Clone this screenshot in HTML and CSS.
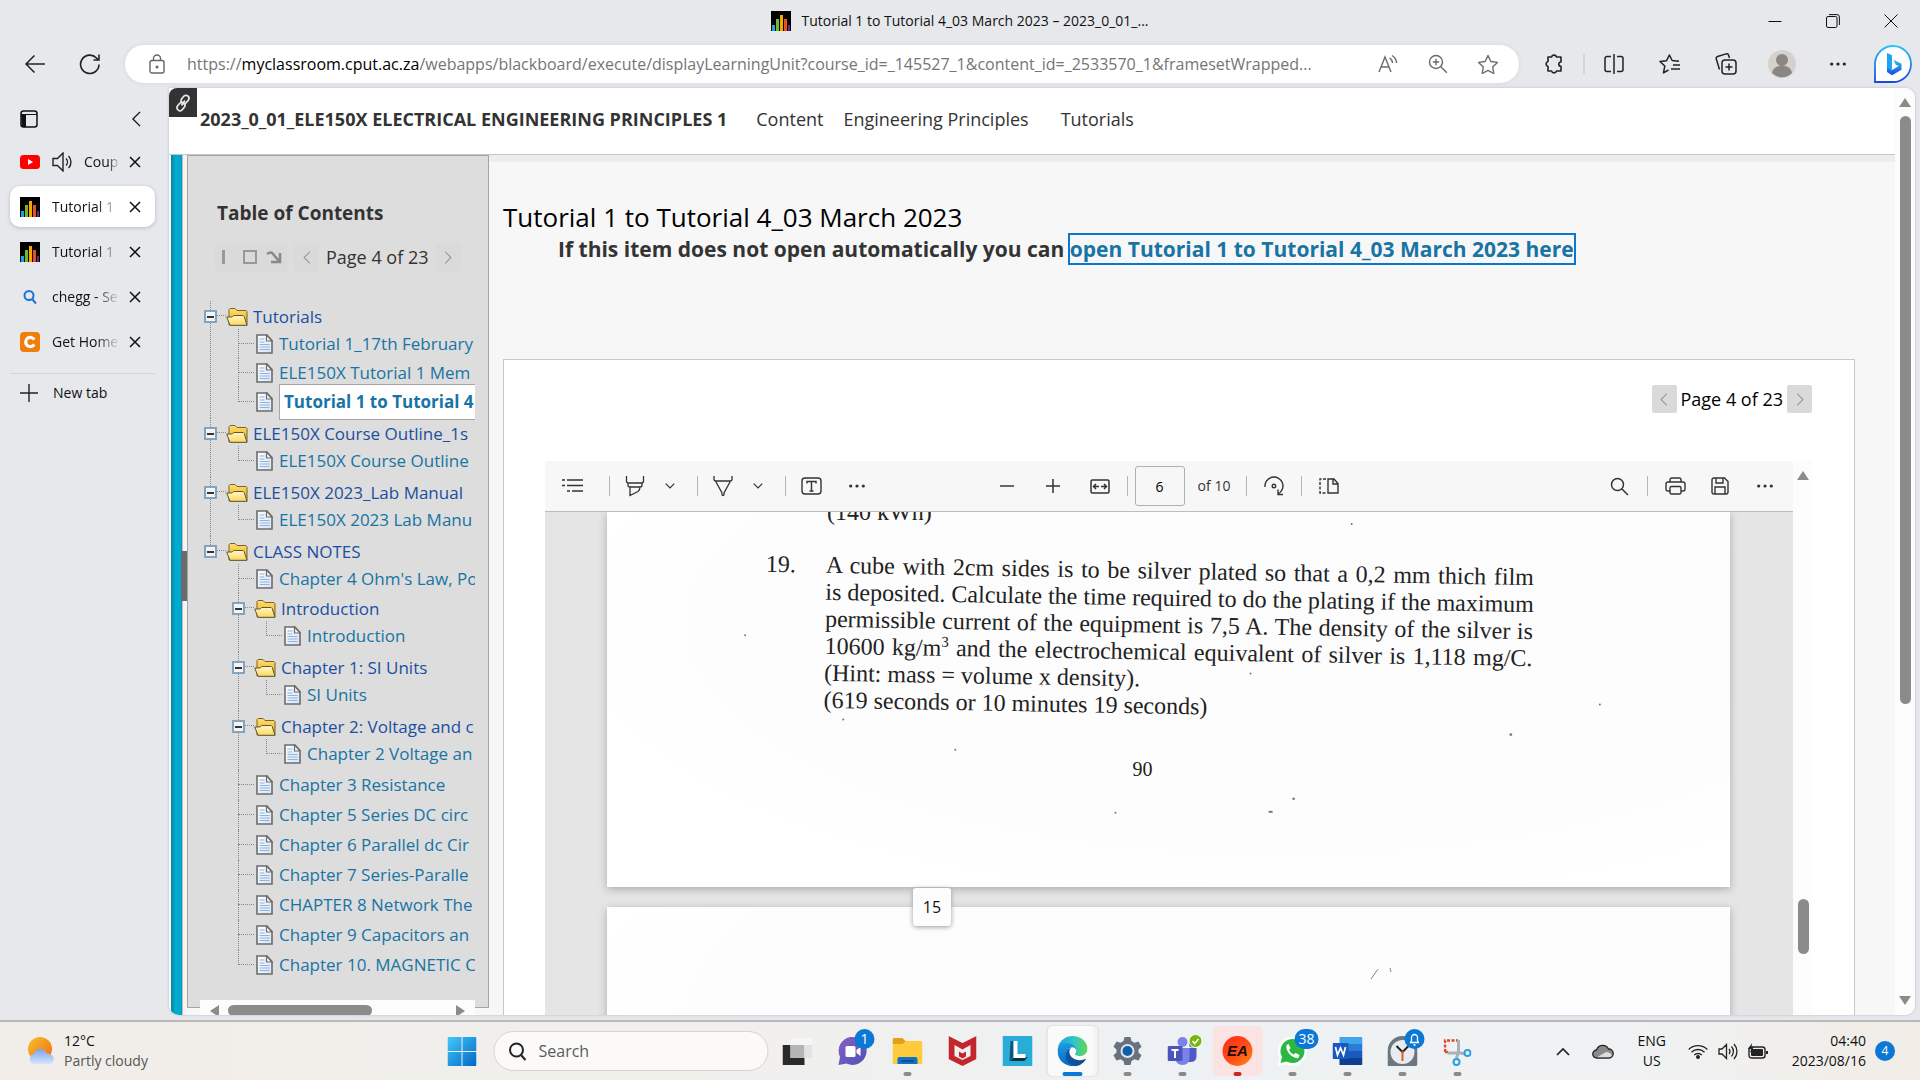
FILE: index.html
```html
<!DOCTYPE html>
<html lang="en">
<head>
<meta charset="utf-8">
<title>Tutorial 1 to Tutorial 4_03 March 2023 – 2023_0_01_...</title>
<link rel="stylesheet" href="styles.css">
</head>
<body>
<svg class="sprite" width="0" height="0" aria-hidden="true">
  <defs>
    <linearGradient id="gFolder" x1="0" y1="0" x2="0" y2="1"><stop offset="0" stop-color="#ffdf70"/><stop offset="1" stop-color="#e9aa10"/></linearGradient>
    <linearGradient id="gFlap" x1="0" y1="0" x2="0" y2="1"><stop offset="0" stop-color="#fff7c8"/><stop offset="1" stop-color="#fbd85a"/></linearGradient>
    <linearGradient id="gPage" x1="0" y1="0" x2="1" y2="1"><stop offset="0" stop-color="#ffffff"/><stop offset="1" stop-color="#d5e3f5"/></linearGradient>
    <linearGradient id="gBing" x1="0" y1="0" x2="0" y2="1"><stop offset="0" stop-color="#2bc3f5"/><stop offset="1" stop-color="#1b48e0"/></linearGradient>
    <linearGradient id="gSun" x1="0" y1="0" x2="1" y2="1"><stop offset="0" stop-color="#f8c12c"/><stop offset="1" stop-color="#ef6c12"/></linearGradient>
    <linearGradient id="gCloud" x1="0" y1="0" x2="0" y2="1"><stop offset="0" stop-color="#7ba4ea"/><stop offset="1" stop-color="#d6e4fb"/></linearGradient>
    <linearGradient id="gWin" x1="0" y1="0" x2="1" y2="1"><stop offset="0" stop-color="#45c8fa"/><stop offset="1" stop-color="#0067c8"/></linearGradient>
    <linearGradient id="gEdgeTop" x1="0" y1="0" x2="1" y2="0"><stop offset="0" stop-color="#1f9fe0"/><stop offset=".55" stop-color="#31c6c8"/><stop offset="1" stop-color="#63d84a"/></linearGradient>
    <linearGradient id="gEdgeMid" x1="0" y1="0" x2="0" y2="1"><stop offset="0" stop-color="#1b9de2"/><stop offset="1" stop-color="#0a6bc4"/></linearGradient>
    <linearGradient id="gEdgeLow" x1="0" y1="0" x2="1" y2="0"><stop offset="0" stop-color="#0c59a4"/><stop offset="1" stop-color="#114a8b"/></linearGradient>
    <linearGradient id="gChat" x1="0" y1="0" x2="1" y2="1"><stop offset="0" stop-color="#8a5fc0"/><stop offset="1" stop-color="#4b53bc"/></linearGradient>
    <symbol id="folder" viewBox="0 0 22 20"><path d="M3 18V2.500l1-1h5l2 2h9l1 1V18z" fill="url(#gFolder)" stroke="#7a6327"/><path d="M.7 10h5.500l1.500-1.500h9.500l1 1L21 18.300H4z" fill="url(#gFlap)" stroke="#5f5637"/></symbol>
    <symbol id="doc" viewBox="0 0 17 20"><path d="M1 1h10l5 5.500V19H1z" fill="url(#gPage)" stroke="#6c6c6c" stroke-width="1.600"/><path d="M10.500 1v6H16z" fill="#f5f5f5" stroke="#6c6c6c" stroke-width="1.200"/><path d="M3.500 5h5M3.500 8h5M3.500 10.500h10M3.500 13h10M3.500 15.500h10" stroke="#8fb3e0" fill="none"/></symbol>
    <symbol id="bb" viewBox="0 0 20 20"><path d="M0 0h20v20H0z" fill="#000"/><path d="M1 14h3v6H1z" fill="#1ba1e8"/><path d="M5 8h3v12H5z" fill="#6fb92c"/><path d="M9 4h3v16H9z" fill="#f6a800"/><path d="M13 8h3v12h-3z" fill="#e8501e"/><path d="M17 14h2v6h-2z" fill="#5b2a86"/></symbol>
    <symbol id="x" viewBox="0 0 12 12"><path d="M1 1l10 10M11 1L1 11" stroke="#111" stroke-width="1.500" fill="none"/></symbol>
    <symbol id="more" viewBox="0 0 20 20"><circle cx="3" cy="10" r="1.800"/><circle cx="10" cy="10" r="1.800"/><circle cx="17" cy="10" r="1.800"/></symbol>
    <symbol id="left" viewBox="0 0 10 18"><path d="M9 1L1 9l8 8" fill="none" stroke="currentColor" stroke-width="1.500"/></symbol>
    <symbol id="right" viewBox="0 0 10 18"><path d="M1 1l8 8-8 8" fill="none" stroke="currentColor" stroke-width="1.500"/></symbol>
    <symbol id="down" viewBox="0 0 10 6"><path d="M.7.700L5 5 9.300.700" fill="none" stroke="#333" stroke-width="1.200"/></symbol>
  </defs>
</svg>

<header class="titlebar">
  <div class="window-title"><svg width="20" height="20"><use href="#bb"/></svg><span>Tutorial 1 to Tutorial 4_03 March 2023 – 2023_0_01_...</span></div>
  <div class="window-controls">
    <button aria-label="Minimize"><svg width="14" height="14"><path d="M.5 7.500h13" stroke="#111"/></svg></button>
    <button aria-label="Restore"><svg width="14" height="14" viewBox="0 0 14 14" fill="none" stroke="#111"><rect x=".5" y="2.500" width="10.500" height="11" rx="1.500"/><path d="M3 .6h8a2.400 2.400 0 0 1 2.400 2.400v8"/></svg></button>
    <button aria-label="Close"><svg width="14" height="14" viewBox="0 0 14 14"><path d="M.5.500l13 13M13.500.500l-13 13" stroke="#111"/></svg></button>
  </div>
</header>

<div class="toolbar">
  <button class="tool" aria-label="Back"><svg width="22" height="20" viewBox="0 0 22 20" fill="none" stroke="#222" stroke-width="1.500"><path d="M21 10H2M10.500 1.500L2 10l8.500 8.500"/></svg></button>
  <button class="tool" aria-label="Refresh"><svg width="22" height="22" viewBox="0 0 22 22" fill="none" stroke="#222" stroke-width="1.600"><path d="M20 11.500A9.200 9.200 0 1 1 17.500 5L19.500 7M20 1.500V7h-5.500"/></svg></button>
  <div class="address">
    <button class="lock" aria-label="Site information"><svg width="16" height="20" viewBox="0 0 16 20" fill="none" stroke="#666" stroke-width="1.400"><rect x="1" y="6.500" width="14" height="12.500" rx="2"/><path d="M4.500 6.500V4.500a3.500 3.500 0 0 1 7 0v2"/><circle cx="8" cy="13" r=".8" fill="#444"/></svg></button>
    <div class="url" role="textbox" aria-label="Address">https://<b>myclassroom.cput.ac.za</b>/webapps/blackboard/execute/displayLearningUnit?course_id=_145527_1&amp;content_id=_2533570_1&amp;framesetWrapped...</div>
    <button class="tool" aria-label="Read aloud"><svg width="20" height="20" viewBox="0 0 20 20" fill="none" stroke="#6b6b6b" stroke-width="1.400"><path d="M1 18L7 3l6 15M3 13h8M11.500 4a6 6 0 0 1 3 5M14 1.500a9 9 0 0 1 4.500 7.500"/></svg></button>
    <button class="tool" aria-label="Zoom"><svg width="20" height="20" viewBox="0 0 20 20" fill="none" stroke="#6b6b6b" stroke-width="1.400"><circle cx="8" cy="8" r="6.500"/><path d="M12.800 12.800l6 6M8 4.800v6.400M4.800 8h6.400"/></svg></button>
    <button class="tool" aria-label="Favorite"><svg width="22" height="21" viewBox="0 0 22 21" fill="none" stroke="#6b6b6b" stroke-width="1.400" stroke-linejoin="round"><path d="M11 1.500l2.900 6 6.500.900-4.700 4.600 1.100 6.500L11 16.400l-5.800 3.100 1.100-6.500L1.600 8.400l6.500-.9z"/></svg></button>
  </div>
  <div class="tools">
    <button class="tool" aria-label="Extensions"><svg width="20" height="22" viewBox="0 0 20 22" fill="none" stroke="#222" stroke-width="1.600" stroke-linejoin="round"><path d="M5 4h2.500a2.600 2.600 0 0 1 5 0H17v5a2.200 2.200 0 0 0 0 4.400V18h-4.500a2.600 2.600 0 0 1-5 0H4v-4.500a2.600 2.600 0 0 1 0-5V4z"/></svg></button>
    <i class="rule"></i>
    <button class="tool" aria-label="Split screen"><svg width="20" height="20" viewBox="0 0 20 20" fill="none" stroke="#222" stroke-width="1.500"><path d="M10 0v20M7 2.500H3a2 2 0 0 0-2 2v11a2 2 0 0 0 2 2h4M13 2.500h4a2 2 0 0 1 2 2v11a2 2 0 0 1-2 2h-4"/></svg></button>
    <button class="tool" aria-label="Favorites"><svg width="22" height="20" viewBox="0 0 22 20" fill="none" stroke="#222" stroke-width="1.500" stroke-linejoin="round"><path d="M20 7.300L13.200 6.500 10.400 1 7.600 6.700 1 7.500l4.800 4.500-1.300 6.800L9.500 16M14 11h7M12 15h9"/></svg></button>
    <button class="tool" aria-label="Collections"><svg width="22" height="22" viewBox="0 0 22 22" fill="none" stroke="#222" stroke-width="1.500"><rect x="7" y="7" width="14" height="14" rx="3"/><path d="M14 10.500v7M10.500 14h7M4.500 16.500L1.300 6a2 2 0 0 1 1.300-2.500l8.500-2.600a2 2 0 0 1 2.500 1.300L14.500 5"/></svg></button>
    <button class="tool profile" aria-label="Profile"><svg width="28" height="28" viewBox="0 0 28 28"><circle cx="14" cy="14" r="14" fill="#d5d1cd"/><circle cx="14" cy="10" r="6" fill="#8b8683"/><path d="M4 23a10 7.500 0 0 1 20 0 14 14 0 0 1-20 0z" fill="#8b8683"/></svg></button>
    <button class="tool" aria-label="Settings and more"><svg width="18" height="18" fill="#222"><use href="#more"/></svg></button>
    <button class="bing" aria-label="Bing chat"><svg width="38" height="38" viewBox="0 0 38 38"><path d="M1 37V18.500A18 18 0 1 1 19 37z" fill="#fff" stroke="url(#gBing)" stroke-width="1.800"/><path d="M13 8l5 2.200v14L13 27z" fill="#1fa4f2"/><path d="M13 22.500V27l5 3.200 9.500-5.500v-6l-8-4 2.300 5 3 1.300-6.800 4z" fill="url(#gBing)"/></svg></button>
  </div>
</div>

<div class="workspace">
  <nav class="tabs" aria-label="Tabs">
    <div class="tabs-head">
      <button aria-label="Tab actions"><svg width="18" height="18" viewBox="0 0 18 18"><rect x="1" y="1" width="16" height="16" rx="2.500" fill="none" stroke="#111" stroke-width="1.500"/><path d="M1 4.500h16" stroke="#111"/><path d="M1 5h5v12H2z" fill="#111"/></svg></button>
      <button aria-label="Collapse pane"><svg width="9" height="16"><use href="#left"/></svg></button>
    </div>
    <div class="tab"><svg width="20" height="20" viewBox="0 0 20 20"><rect y="3" width="20" height="14" rx="3.500" fill="#f00"/><path d="M8 7l5 3-5 3z" fill="#fff"/></svg>
      <svg width="20" height="20" viewBox="0 0 20 20" fill="none" stroke="#222" stroke-width="1.400"><path d="M1 6.500h4.500L11 1v18l-5.500-5.500H1zM14 6.500a5 5 0 0 1 0 7M16.500 4a8.500 8.500 0 0 1 0 12"/></svg>
      <a href="#">Coup</a><button aria-label="Close tab"><svg width="12" height="12"><use href="#x"/></svg></button></div>
    <div class="tab current"><svg width="20" height="20"><use href="#bb"/></svg><a href="#">Tutorial 1</a><button aria-label="Close tab"><svg width="12" height="12"><use href="#x"/></svg></button></div>
    <div class="tab"><svg width="20" height="20"><use href="#bb"/></svg><a href="#">Tutorial 1</a><button aria-label="Close tab"><svg width="12" height="12"><use href="#x"/></svg></button></div>
    <div class="tab"><svg width="20" height="20" viewBox="0 0 20 20" fill="none" stroke="#1b74d4" stroke-width="2"><circle cx="9" cy="8.500" r="4.500"/><path d="M12 12l4 4.500"/></svg><a href="#">chegg - Se</a><button aria-label="Close tab"><svg width="12" height="12"><use href="#x"/></svg></button></div>
    <div class="tab"><svg width="20" height="20" viewBox="0 0 20 20"><rect width="20" height="20" rx="4" fill="#f07d0c"/><path d="M14.200 7.600A4.600 4.600 0 1 0 14.200 12.400" fill="none" stroke="#fff" stroke-width="3.200"/></svg><a href="#">Get Home</a><button aria-label="Close tab"><svg width="12" height="12"><use href="#x"/></svg></button></div>
    <button class="new-tab"><svg width="18" height="18" viewBox="0 0 18 18"><path d="M9 0v18M0 9h18" stroke="#222" stroke-width="1.400"/></svg>New tab</button>
  </nav>

  <div class="viewport">
    <div class="site">
      <header class="course">
        <span class="chain"><svg width="18" height="18" viewBox="0 0 18 18" fill="none" stroke="#e8e8e8" stroke-width="1.700"><rect x="8" y="1" width="6" height="9" rx="3" transform="rotate(38 11 5.500)"/><rect x="4" y="8" width="6" height="9" rx="3" transform="rotate(38 7 12.500)"/><path d="M7.500 11.500l3.500-5"/></svg></span>
        <a class="course-name" href="#">2023_0_01_ELE150X ELECTRICAL ENGINEERING PRINCIPLES 1</a>
        <nav><a href="#">Content</a><a href="#">Engineering Principles</a><a href="#">Tutorials</a></nav>
      </header>
      <div class="unit">
        <div class="rail"><span class="grip"></span></div>
        <aside class="toc">
          <div class="toc-panel">
            <h2>Table of Contents</h2>
            <div class="toc-tools">
              <span class="dock">
                <button aria-label="Minimize contents"><svg width="14" height="16"><path d="M3.500 1v14" stroke="#999" stroke-width="3"/></svg></button>
                <button aria-label="Restore contents"><svg width="14" height="14"><rect x="1" y="1" width="12" height="12" fill="none" stroke="#999" stroke-width="2"/></svg></button>
                <button aria-label="Move contents"><svg width="16" height="14" viewBox="0 0 16 14" fill="none" stroke="#888" stroke-width="2.500"><path d="M1 4c3-2 5-2 6 0l6 7M14 3v9H5"/></svg></button>
              </span>
              <button class="step" aria-label="Previous page"><svg width="8" height="13"><use href="#left"/></svg></button>
              <span>Page 4 of 23</span>
              <button class="step" aria-label="Next page"><svg width="8" height="13"><use href="#right"/></svg></button>
            </div>
            <ul class="tree">
              <li class="group"><div class="folder"><button class="toggle" aria-label="Collapse"></button><svg width="22" height="20"><use href="#folder"/></svg><a href="#">Tutorials</a></div>
                <ul>
                  <li class="leaf"><svg width="17" height="20"><use href="#doc"/></svg><a href="#">Tutorial 1_17th February</a></li>
                  <li class="leaf"><svg width="17" height="20"><use href="#doc"/></svg><a href="#">ELE150X Tutorial 1 Mem</a></li>
                  <li class="leaf"><svg width="17" height="20"><use href="#doc"/></svg><a class="selected" href="#">Tutorial 1 to Tutorial 4</a></li>
                </ul></li>
              <li class="group"><div class="folder"><button class="toggle" aria-label="Collapse"></button><svg width="22" height="20"><use href="#folder"/></svg><a href="#">ELE150X Course Outline_1s</a></div>
                <ul><li class="leaf"><svg width="17" height="20"><use href="#doc"/></svg><a href="#">ELE150X Course Outline</a></li></ul></li>
              <li class="group"><div class="folder"><button class="toggle" aria-label="Collapse"></button><svg width="22" height="20"><use href="#folder"/></svg><a href="#">ELE150X 2023_Lab Manual</a></div>
                <ul><li class="leaf"><svg width="17" height="20"><use href="#doc"/></svg><a href="#">ELE150X 2023 Lab Manu</a></li></ul></li>
              <li class="group"><div class="folder"><button class="toggle" aria-label="Collapse"></button><svg width="22" height="20"><use href="#folder"/></svg><a href="#">CLASS NOTES</a></div>
                <ul>
                  <li class="leaf"><svg width="17" height="20"><use href="#doc"/></svg><a href="#">Chapter 4 Ohm's Law, Po</a></li>
                  <li class="group"><div class="folder"><button class="toggle" aria-label="Collapse"></button><svg width="22" height="20"><use href="#folder"/></svg><a href="#">Introduction</a></div>
                    <ul><li class="leaf"><svg width="17" height="20"><use href="#doc"/></svg><a href="#">Introduction</a></li></ul></li>
                  <li class="group"><div class="folder"><button class="toggle" aria-label="Collapse"></button><svg width="22" height="20"><use href="#folder"/></svg><a href="#">Chapter 1: SI Units</a></div>
                    <ul><li class="leaf"><svg width="17" height="20"><use href="#doc"/></svg><a href="#">SI Units</a></li></ul></li>
                  <li class="group"><div class="folder"><button class="toggle" aria-label="Collapse"></button><svg width="22" height="20"><use href="#folder"/></svg><a href="#">Chapter 2: Voltage and c</a></div>
                    <ul><li class="leaf"><svg width="17" height="20"><use href="#doc"/></svg><a href="#">Chapter 2 Voltage an</a></li></ul></li>
                  <li class="leaf"><svg width="17" height="20"><use href="#doc"/></svg><a href="#">Chapter 3 Resistance</a></li>
                  <li class="leaf"><svg width="17" height="20"><use href="#doc"/></svg><a href="#">Chapter 5 Series DC circ</a></li>
                  <li class="leaf"><svg width="17" height="20"><use href="#doc"/></svg><a href="#">Chapter 6 Parallel dc Cir</a></li>
                  <li class="leaf"><svg width="17" height="20"><use href="#doc"/></svg><a href="#">Chapter 7 Series-Paralle</a></li>
                  <li class="leaf"><svg width="17" height="20"><use href="#doc"/></svg><a href="#">CHAPTER 8 Network The</a></li>
                  <li class="leaf"><svg width="17" height="20"><use href="#doc"/></svg><a href="#">Chapter 9 Capacitors an</a></li>
                  <li class="leaf"><svg width="17" height="20"><use href="#doc"/></svg><a href="#">Chapter 10. MAGNETIC C</a></li>
                </ul></li>
            </ul>
          </div>
          <div class="hscroll"><i class="arrow-left"></i><i class="hthumb"></i><i class="arrow-right"></i></div>
        </aside>
        <main class="item">
          <h1>Tutorial 1 to Tutorial 4_03 March 2023</h1>
          <p class="fallback">If this item does not open automatically you can <a href="#">open Tutorial 1 to Tutorial 4_03 March 2023 here</a></p>
          <section class="frame">
            <div class="pager">
              <button class="step" aria-label="Previous page"><svg width="8" height="13"><use href="#left"/></svg></button>
              <span>Page 4 of 23</span>
              <button class="step" aria-label="Next page"><svg width="8" height="13"><use href="#right"/></svg></button>
            </div>
            <div class="pdf">
              <div class="pdf-main">
                <div class="pdf-bar">
                  <div class="bar-left">
                    <button class="wide" aria-label="Contents"><svg width="22" height="16" viewBox="0 0 22 16" fill="none" stroke="#333" stroke-width="1.500"><path d="M0 2h3M5 2h16M0 7.500h3M5 7.500h16M5 13h3M10 13h11"/></svg></button>
                    <i class="sep"></i>
                    <button aria-label="Highlight"><svg width="20" height="22" viewBox="0 0 20 22" fill="none" stroke="#333" stroke-width="1.300"><path d="M1.500 1v5q0 2 2 2h13q2 0 2-2V1M3 8v2q0 2 2 2h10q2 0 2-2V8M5 12v8.500l8-4q2-1.500 2-4.500"/></svg></button>
                    <button class="menu" aria-label="Highlight colors"><svg width="10" height="6"><use href="#down"/></svg></button>
                    <i class="sep"></i>
                    <button aria-label="Draw"><svg width="20" height="22" viewBox="0 0 20 22" fill="none" stroke="#333" stroke-width="1.300"><path d="M1 1v3q0 2 2 2h14q2 0 2-2V1M2.500 6L9 18v1.500q0 1 1 1t1-1V18l6.500-12"/></svg></button>
                    <button class="menu" aria-label="Draw properties"><svg width="10" height="6"><use href="#down"/></svg></button>
                    <i class="sep"></i>
                    <button aria-label="Add text"><svg width="21" height="18" viewBox="0 0 21 18" fill="none" stroke="#333" stroke-width="1.400"><rect x="1" y="1" width="19" height="16" rx="3"/><path d="M6 6.500V4.500h9v2M10.500 4.500V14M8.500 14h4"/></svg></button>
                    <button class="more" aria-label="More tools"><svg width="18" height="18" fill="#333"><use href="#more"/></svg></button>
                  </div>
                  <div class="bar-mid">
                    <button class="minus" aria-label="Zoom out"><svg width="14" height="14"><path d="M0 7h14" stroke="#444" stroke-width="1.600"/></svg></button>
                    <button aria-label="Zoom in"><svg width="14" height="14"><path d="M0 7h14M7 0v14" stroke="#333" stroke-width="1.500"/></svg></button>
                    <button aria-label="Fit to width"><svg width="20" height="15" viewBox="0 0 20 15" fill="none" stroke="#333" stroke-width="1.500"><rect x="1" y="1" width="18" height="13" rx="1.500"/><path d="M9 7.500H4M6 5L3.500 7.500 6 10M11 7.500h5M14 5l2.500 2.500L14 10"/></svg></button>
                    <i class="line"></i>
                    <input type="text" value="6" aria-label="Page number">
                    <span class="total">of 10</span>
                    <i class="line"></i>
                    <button aria-label="Rotate"><svg width="20" height="20" viewBox="0 0 20 20" fill="none" stroke="#333" stroke-width="1.400"><path d="M1 11A9 9 0 1 1 14 18M14 13.500v5h5"/><circle cx="10" cy="10" r="1.800"/></svg></button>
                    <i class="line"></i>
                    <button aria-label="Page view"><svg width="20" height="16" viewBox="0 0 20 16" fill="none" stroke="#333" stroke-width="1.400"><path d="M9 1h6l4 4.500V15H9zM14 1v5h5"/><path d="M7 1H1v14h6" stroke-dasharray="3 1.500"/></svg></button>
                  </div>
                  <div class="bar-right">
                    <button aria-label="Find"><svg width="19" height="19" viewBox="0 0 19 19" fill="none" stroke="#333" stroke-width="1.500"><circle cx="7.500" cy="7.500" r="6"/><path d="M12 12l6 6"/></svg></button>
                    <i class="line"></i>
                    <button aria-label="Print"><svg width="21" height="18" viewBox="0 0 21 18" fill="none" stroke="#333" stroke-width="1.400"><path d="M5 5V3q0-2 2-2h7q2 0 2 2v2M5 14H3q-2 0-2-2V7q0-2 2-2h15q2 0 2 2v5q0 2-2 2h-2"/><rect x="5" y="9.500" width="11" height="7.500" rx="1.500"/></svg></button>
                    <button aria-label="Save"><svg width="18" height="18" viewBox="0 0 18 18" fill="none" stroke="#333" stroke-width="1.400"><path d="M3 1h10.500L17 4.500V15q0 2-2 2H3q-2 0-2-2V3q0-2 2-2zM5 1v5h7V1M4 17v-7h10v7"/></svg></button>
                    <button aria-label="More options"><svg width="18" height="18" fill="#333"><use href="#more"/></svg></button>
                  </div>
                </div>
                <div class="sheets">
                  <article class="sheet">
                    <svg class="specks" viewBox="0 0 1122 374" preserveAspectRatio="none" aria-hidden="true"><g fill="#777"><circle cx="138" cy="123" r="1"/><circle cx="643" cy="161" r="1"/><circle cx="236" cy="207" r="1"/><circle cx="903" cy="222" r="1.400"/><circle cx="992" cy="192" r="1"/><circle cx="348" cy="237" r="1"/><circle cx="686" cy="286" r="1.300"/><path d="M661 298h4v2h-4z"/><circle cx="508" cy="300" r="1"/><circle cx="744" cy="12" r="1"/></g></svg>
                    <p class="answer">(140 kWh)</p>
                    <div class="problem">
                      <span class="number">19.</span>
                      <p>
                        <span class="full">A cube with 2cm sides is to be silver plated so that a 0,2 mm thich film</span>
                        <span class="full">is deposited. Calculate the time required to do the plating if the maximum</span>
                        <span class="full">permissible current of the equipment is 7,5 A. The density of the silver is</span>
                        <span class="full">10600 kg/m<sup>3</sup> and the electrochemical equivalent of silver is 1,118 mg/C.</span>
                        <span>(Hint: mass = volume x density).</span>
                        <span>(619 seconds or 10 minutes 19 seconds)</span>
                      </p>
                    </div>
                    <p class="folio">90</p>
                  </article>
                  <article class="sheet next">
                    <svg width="24" height="14" viewBox="0 0 24 14"><path d="M2 12L9 2M21 1l1 4" stroke="#888" fill="none"/></svg>
                  </article>
                  <span class="page-tip">15</span>
                </div>
              </div>
              <div class="vscroll"><i class="arrow-up"></i><i class="vthumb"></i></div>
            </div>
          </section>
        </main>
      </div>
    </div>
    <div class="page-scroll"><i class="arrow-up"></i><i class="page-thumb"></i><i class="arrow-down"></i></div>
  </div>
</div>

<footer class="taskbar">
  <div class="weather"><svg width="28" height="28" viewBox="0 0 28 28"><circle cx="13" cy="12" r="12" fill="url(#gSun)"/><path d="M7 27a5 5 0 0 1-.5-9.800A7 7 0 0 1 20 17a5 5 0 0 1 3 10z" fill="url(#gCloud)"/></svg><p><span>12°C</span><small>Partly cloudy</small></p></div>
  <div class="dock-apps">
    <button class="start" aria-label="Start"><svg width="29" height="29" viewBox="0 0 29 29" fill="url(#gWin)"><path d="M0 1q0-1 1-1h13v14H0zM15 0h13q1 0 1 1v13H15zM0 15h14v14H1q-1 0-1-1zM15 15h14v13q0 1-1 1H15z"/></svg></button>
    <label class="search"><svg width="18" height="19" viewBox="0 0 18 19" fill="none" stroke="#222" stroke-width="2"><circle cx="8" cy="8" r="6.500"/><path d="M12.500 13l4.500 5"/></svg><input type="text" placeholder="Search" aria-label="Search"></label>
    <div class="apps">
      <button class="app" aria-label="Task view"><svg width="30" height="30" viewBox="0 0 30 30"><path d="M0 9h22v20H0z" fill="#2a2a2a"/><path d="M8 2h22v20H8z" fill="#f6f6f6"/><path d="M8 9h14v13H8z" fill="#b5b5b5"/><path d="M22 9h8v13h-8z" fill="#e2e2e2"/></svg></button>
      <button class="app" aria-label="Chat"><svg width="30" height="30" viewBox="0 0 30 30"><path d="M1 29l1.500-8A14 14 0 1 1 9 27.500z" fill="url(#gChat)"/><rect x="8" y="10" width="10" height="11" rx="1.500" fill="#fff"/><path d="M19 14l4-3v9l-4-3z" fill="#fff"/></svg><b class="badge">1</b></button>
      <button class="app open" aria-label="File Explorer"><svg width="30" height="30" viewBox="0 0 30 30"><rect y="5" width="30" height="23" rx="1.500" fill="#fdcb3c"/><path d="M0 4q0-2 2-2h8l3 3-3 3H0z" fill="#e2a112"/><path d="M5 28v-5q0-2 2-2h16q2 0 2 2v5z" fill="#1271c4"/><path d="M9 24h12v2H9z" fill="#0b4f93"/></svg></button>
      <button class="app" aria-label="McAfee"><svg width="28" height="30" viewBox="0 0 28 30"><path d="M0 0l14 7 14-7v23l-14 7-14-7z" fill="#c3272d"/><path d="M6 9l8 4.500L22 9v11l-8 4-8-4z" fill="#f1f1f1"/><path d="M10.500 15.500L14 17.500l3.500-2v5L14 22.500l-3.500-2z" fill="#c3272d"/></svg></button>
      <button class="app" aria-label="Lenovo"><svg width="30" height="30" viewBox="0 0 30 30"><path d="M0 0h30v30H0z" fill="#29add8"/><path d="M7 25l5-4h13l-3 4z" fill="#0d3350"/><path d="M11 5h-3L7 25l4-4z" fill="#14527a"/><path d="M11 5h4v13h8v4H11z" fill="#fff"/></svg></button>
      <button class="app active" aria-label="Microsoft Edge"><svg width="30" height="30" viewBox="0 0 256 256"><path d="M235.700 195.500a93.700 93.700 0 0 1-10.600 4.700 101.900 101.900 0 0 1-35.900 6.400c-47.300 0-88.500-32.500-88.500-74.300A31.500 31.500 0 0 1 117.100 105c-42.800 1.800-53.800 46.400-53.800 72.500 0 73.900 68.100 81.400 82.800 81.400 7.900 0 19.800-2.300 27-4.600l1.300-.4a128.300 128.300 0 0 0 66.600-52.800 4 4 0 0 0-5.300-5.600z" fill="url(#gEdgeLow)"/><path d="M105.700 241.400A79.200 79.200 0 0 1 83 220.100 80.700 80.700 0 0 1 112.500 100.700c3.200-1.500 8.500-4.100 15.600-4a32.400 32.400 0 0 1 25.700 13 31.900 31.900 0 0 1 6.300 18.700c0-.2 24.500-79.600-80-79.600C36.100 48.800 0 90.400 0 127a130.200 130.200 0 0 0 12.100 56 128 128 0 0 0 156.400 67.100 75.600 75.600 0 0 1-62.800-8z" fill="url(#gEdgeMid)"/><path d="M152.300 148.900c-.8 1-3.300 2.500-3.300 5.600 0 2.600 1.700 5.100 4.700 7.300 14.400 10 41.500 8.600 41.600 8.600a59.600 59.600 0 0 0 30.300-8.300A61.400 61.400 0 0 0 256 109.200c.3-22.400-8-37.300-11.300-43.900C223.500 23.800 177.700 0 128 0A128 128 0 0 0 0 126.200c.5-36.500 36.800-66 80-66 3.500 0 23.500.3 42 10 16.300 8.600 24.900 19 30.900 29.200 6.100 10.700 7.200 24.200 7.200 29.500s-2.700 13.400-7.800 20z" fill="url(#gEdgeTop)"/></svg></button>
      <button class="app open" aria-label="Settings"><svg width="30" height="30" viewBox="0 0 30 30"><path d="M12 1h6l1 4 3 1.700 4-1.200 3 5.200-3 2.800v3l3 2.800-3 5.200-4-1.200L19 25l-1 4h-6l-1-4-3-1.700-4 1.200-3-5.200 3-2.800v-3l-3-2.800 3-5.200 4 1.200L11 5z" fill="#68727e"/><circle cx="15" cy="15" r="7" fill="#dfe5ea"/><circle cx="15" cy="15" r="5" fill="#0f5ea8"/></svg></button>
      <button class="app open" aria-label="Teams"><svg width="30" height="30" viewBox="0 0 30 30"><circle cx="15" cy="6" r="5" fill="#7b83eb"/><circle cx="25" cy="8" r="3.500" fill="#5059c9"/><path d="M20 12h9v8q0 6-6 6h-3z" fill="#5059c9"/><path d="M8 12h14v10q0 7-7 7t-7-7z" fill="#7b83eb"/><rect y="10" width="15" height="15" rx="1.500" fill="#4b53bc"/><path d="M4 14h7M7.500 14v8" stroke="#fff" stroke-width="2"/></svg><svg class="tick" width="14" height="14" viewBox="0 0 14 14"><circle cx="7" cy="7" r="6.500" fill="#79b60c" stroke="#fff"/><path d="M4 7l2.200 2.500L10 5" fill="none" stroke="#fff" stroke-width="1.500"/></svg></button>
      <button class="app alert" aria-label="EA app"><span class="ea">EA</span></button>
      <button class="app open" aria-label="WhatsApp"><svg width="30" height="30" viewBox="0 0 30 30"><path d="M0 30l2-8A14.500 14.500 0 1 1 8 28z" fill="#fff"/><path d="M3 27l1.500-6A12 12 0 1 1 9 25.500z" fill="#2bb741"/><path d="M9 9l2-1 2 4-1.500 2q1.500 3 4.500 4.500l2-1.500 4 2-1 3q-4 1-8-3-5-5-4-10z" fill="#fff"/></svg><b class="badge">38</b></button>
      <button class="app open" aria-label="Word"><svg width="30" height="30" viewBox="0 0 30 30"><path d="M7 1h22q1 0 1 1v6H7z" fill="#41a5ee"/><path d="M7 8h23v7H7z" fill="#2b7cd3"/><path d="M7 15h23v7H7z" fill="#185abd"/><path d="M7 22h23v6q0 1-1 1H7z" fill="#103f91"/><rect y="7" width="16" height="16" rx="1" fill="#185abd"/><path d="M3 11l2 8 3-7 3 7 2-8" fill="none" stroke="#fff" stroke-width="1.700"/></svg></button>
      <button class="app open" aria-label="Clock"><svg width="30" height="30" viewBox="0 0 30 30"><path d="M0 30V15A15 15 0 0 1 30 15V28q0 2-2 2z" fill="#6c7681"/><circle cx="15" cy="16" r="12" fill="#e8ecf0"/><path d="M9 10l6 6 6-6" fill="none" stroke="#222" stroke-width="2"/><path d="M15 15v10" stroke="#e25a1c" stroke-width="2"/></svg><b class="badge"><svg width="10" height="13" viewBox="0 0 10 13" fill="none" stroke="#fff" stroke-width="1.300"><path d="M1 9.500h8L8 7.500V4.500a3 3 0 0 0-6 0v3zM4 12h2"/></svg></b></button>
      <button class="app open" aria-label="Snipping Tool"><svg width="28" height="30" viewBox="0 0 28 30" fill="none"><path d="M1.500 16V4.500h13M1.500 16h4" stroke="#e04a22" stroke-width="2.500" stroke-dasharray="3 1.500"/><path d="M15 4v12l-2 6M4 17h13l5 1" stroke="#a9b0b7" stroke-width="3"/><circle cx="24" cy="17" r="3" stroke="#2aa0e0" stroke-width="2"/><circle cx="13" cy="26" r="3" stroke="#2aa0e0" stroke-width="2"/></svg></button>
    </div>
  </div>
  <div class="tray">
    <button aria-label="Show hidden icons"><svg width="14" height="9" viewBox="0 0 14 9"><path d="M1 8l6-6 6 6" fill="none" stroke="#222" stroke-width="1.700"/></svg></button>
    <svg class="onedrive" width="22" height="15" viewBox="0 0 22 15"><path d="M5 14a4 4 0 0 1-.5-8A6.500 6.500 0 0 1 16.500 5 4.500 4.500 0 0 1 17 14z" fill="#8a8a8a" stroke="#222" stroke-width="1.300"/><path d="M5 13.300l9-5.300q6 1 5.500 3.500-.5 1.800-2.500 1.800z" fill="#ddd"/></svg>
    <p class="lang">ENG<br>US</p>
    <div class="status">
      <svg width="20" height="15" viewBox="0 0 20 15" fill="none" stroke="#222" stroke-width="1.300"><path d="M.7 5.500a13 13 0 0 1 18.600 0M3.500 8.200a9.200 9.200 0 0 1 13 0M6.200 11a5.500 5.500 0 0 1 7.600 0"/><circle cx="10" cy="13" r="1.300" fill="#222"/></svg>
      <svg width="20" height="17" viewBox="0 0 20 17" fill="none" stroke="#222" stroke-width="1.300"><path d="M1 6h3l4.500-4.500v14L4 11H1zM11 6a4 4 0 0 1 0 5M13.500 3.500a7.500 7.500 0 0 1 0 10M16 1a11 11 0 0 1 0 15"/></svg>
      <svg width="20" height="16" viewBox="0 0 20 16"><rect x="1" y="4" width="16" height="11" rx="2.500" fill="none" stroke="#222" stroke-width="1.400"/><rect x="3" y="6" width="12" height="7" rx="1" fill="#222"/><path d="M18 8h2v3h-2z" fill="#222"/><path d="M4 0L0 6h3l-1 4 4-6H3.500z" fill="#222"/></svg>
    </div>
    <p class="clock">04:40<br>2023/08/16</p>
    <b class="count">4</b>
  </div>
</footer>
</body>
</html>
```
FILE: styles.css
```css
* { box-sizing: border-box; }
body {
  margin: 0;
  height: 100vh;
  display: flex;
  flex-direction: column;
  overflow: hidden;
  background: #e6e8ec;
  color: #111;
  font: 14px/20px "Open Sans", "Noto Sans", sans-serif;
}
button { border: 0; margin: 0; padding: 0; background: none; font: inherit; color: inherit; display: flex; align-items: center; justify-content: center; }
a { color: inherit; text-decoration: none; }
p, h1, h2, ul { margin: 0; padding: 0; }
ul { list-style: none; }
svg { flex: none; display: block; }
.sprite { position: absolute; }

/* window chrome */
.titlebar { flex: none; height: 41px; display: grid; grid-template-columns: 1fr auto 1fr; align-items: center; }
.window-title { grid-column: 2; display: flex; align-items: center; gap: 10px; }
.window-controls { display: flex; justify-content: flex-end; }
.window-controls button { width: 58px; height: 40px; }
.toolbar { flex: none; height: 47px; padding: 4px 8px 5px 15px; display: flex; align-items: center; gap: 15px; }
.tool { width: 40px; height: 38px; }
.address { flex: 1; min-width: 0; height: 38px; padding: 0 6px 0 24px; display: flex; align-items: center; border-radius: 19px; background: #fff; box-shadow: 0 0 4px #d4d6da; }
.address .tool { width: 50px; }
.lock { width: 16px; margin-right: 22px; }
.url { flex: 1; min-width: 0; overflow: hidden; white-space: nowrap; font-size: 16px; line-height: 24px; color: #757575; }
.url b { font-weight: 400; color: #000; }
.tools { display: flex; align-items: center; gap: 16px; }
.rule { width: 2px; height: 20px; margin: 0 -7px; background: #d3d5d9; }
.bing { width: 38px; height: 38px; }

/* vertical tabs */
.workspace { flex: 1; min-height: 0; display: flex; padding: 0 5px 5px 0; }
.tabs { flex: none; width: 169px; padding: 12px 14px 0 10px; display: flex; flex-direction: column; gap: 4px; }
.tabs-head { height: 37px; padding: 0 14px 0 10px; display: flex; align-items: center; justify-content: space-between; }
.tab { height: 41px; padding: 0 10px; display: flex; align-items: center; gap: 12px; border-radius: 10px; }
.tab a { flex: 1; min-width: 0; overflow: hidden; white-space: nowrap; -webkit-mask-image: linear-gradient(90deg, #000 65%, transparent); mask-image: linear-gradient(90deg, #000 65%, transparent); }
.tab button { width: 20px; height: 20px; margin-left: -7px; }
.current { background: #fff; box-shadow: 0 1px 4px #b9bcc2; }
.new-tab { margin-top: 7px; padding: 10px 10px 8px; gap: 15px; justify-content: flex-start; border-top: 1px solid #d3d5d9; line-height: 18px; }

/* web page viewport */
.viewport { flex: 1; min-width: 0; display: flex; overflow: hidden; border-radius: 0 10px 10px 10px; background: #fff; box-shadow: 0 0 3px #b8bac0; }
.page-scroll { position: relative; flex: none; width: 20px; background: #fcfcfc; }
.page-thumb { position: absolute; top: 3%; right: 4px; width: 11px; height: 588px; border-radius: 6px; background: #8b8b8b; }
.arrow-up, .arrow-down { position: absolute; right: 4px; border: 6px solid transparent; }
.arrow-up { top: 4px; border-bottom: 9px solid #8b8b8b; }
.arrow-down { bottom: 4px; border-top: 9px solid #8b8b8b; }
.site { flex: 1; min-width: 0; display: flex; flex-direction: column; font-size: 18px; line-height: 24px; color: #333; }
.course { position: relative; flex: none; height: 67px; padding: 0 0 4px 31px; display: flex; align-items: center; gap: 29px; border-bottom: 1px solid #c6c6c6; white-space: nowrap; }
.chain { position: absolute; left: 0; top: 0; width: 28px; height: 29px; display: flex; align-items: center; justify-content: center; border-radius: 8px 0 0 0; background: #333; }
.course-name { font-weight: 700; }
.course nav { display: flex; gap: 20px; }
.course nav a:last-child { margin-left: 12px; }
.unit { flex: 1; min-height: 0; display: flex; background: #f7f7f7; }
.rail { position: relative; flex: none; width: 18px; border-left: 2px solid #fff; background: linear-gradient(90deg, #0786a0, #00a9cd 4px, #00a9cd 10px, #068eab 11px, #888 11px, #f4f4f4 12px); }
.grip { position: absolute; top: 46%; right: 0; width: 6px; height: 50px; background: #6b6b6b; }

/* table of contents */
.toc { position: relative; flex: none; width: 302px; }
.toc-panel { height: calc(100% - 7px); padding: 42px 13px 0 16px; overflow: hidden; border: 1px solid #a5a5a5; background: #ddd; }
.toc h2 { padding-left: 13px; font-size: 19px; line-height: 30px; }
.toc-tools { height: 28px; margin: 15px 0 30px 11px; display: flex; align-items: center; gap: 7px; }
.dock { height: 28px; padding: 0 5px; display: flex; align-items: center; gap: 9px; background: #dadada; }
.step { width: 25px; height: 28px; border-radius: 2px; background: #dadada; color: #999; }
.tree { overflow: hidden; white-space: nowrap; font-size: 17px; color: #1874a4; }
.tree ul { padding-left: 28px; }
.tree li { position: relative; }
.tree li::before { content: ""; position: absolute; left: 6px; top: 0; bottom: 0; border-left: 1px dotted #888; }
.tree li::after { content: ""; position: absolute; left: 6px; top: 14px; width: 16px; border-top: 1px dotted #888; }
.tree li:last-child::before { bottom: auto; height: 15px; }
.group { padding: 3px 0 2px; }
.folder { height: 25px; display: flex; align-items: center; color: #1b4fa0; }
.folder svg { margin: 0 5px 0 9px; }
.toggle { position: relative; z-index: 1; flex: none; width: 13px; height: 13px; border: 2px solid #86a3bd; background: #f4f4f4; }
.toggle::before { content: ""; width: 7px; height: 2px; background: #333; }
.leaf { height: 29px; padding-left: 24px; display: flex; align-items: center; gap: 6px; }
.group ~ .leaf { height: 30px; }
.selected { position: relative; z-index: 1; flex: 1 0 auto; height: 36px; padding: 0 4px; border: 1px solid #a5a5a5; border-right: 0; background: #fff; font-weight: 700; line-height: 34px; }
.hscroll { position: absolute; left: 13px; right: 14px; bottom: 0; height: 15px; background: #fcfcfc; }
.hscroll i { position: absolute; top: 5px; }
.hthumb { left: 28px; width: 144px; height: 11px; border-radius: 6px; background: #8b8b8b; }
.arrow-left, .arrow-right { border: 6px solid transparent; }
.arrow-left { left: 4px; border-right: 9px solid #8b8b8b; }
.arrow-right { right: 4px; border-left: 9px solid #8b8b8b; }

/* learning unit item */
.item { flex: 1; min-width: 0; padding: 40px 40px 0 14px; border-top: 7px solid #ededed; display: flex; flex-direction: column; }
.item h1 { margin-bottom: 2px; font-size: 26px; font-weight: 400; line-height: 30px; color: #000; }
.fallback { padding-left: 55px; font-size: 21px; font-weight: 700; line-height: 30px; white-space: nowrap; }
.fallback a { color: #1874a4; outline: 2px solid #0b78d0; }
.frame { flex: 1; min-height: 0; margin-top: 95px; padding: 25px 42px 0 41px; display: flex; flex-direction: column; gap: 48px; border: 1px solid #c9c9c9; border-bottom: 0; background: #fff; }
.pager { display: flex; justify-content: flex-end; align-items: center; gap: 4px; color: #000; }
.pdf { flex: 1; min-height: 0; display: flex; }
.pdf-main { flex: 1; min-width: 0; display: flex; flex-direction: column; }
.pdf-bar { flex: none; height: 51px; display: grid; grid-template-columns: 1fr auto 1fr; align-items: center; border-bottom: 1px solid #bdbdbd; background: #f7f7f7; }
.pdf-bar > div { display: flex; align-items: center; }
.pdf-bar button { width: 40px; height: 40px; }
.bar-left { padding-left: 5px; }
.pdf-bar .bar-left .wide { width: 46px; }
.pdf-bar .bar-left .menu { width: 28px; margin-left: 1px; }
.bar-left .more { margin-left: 6px; }
.sep, .line { width: 1px; height: 20px; background: #b5b5b5; }
.sep { margin: 0 5px 0 13px; }
.pdf-bar .bar-mid { gap: 7px; font-size: 14px; }
.pdf-bar .bar-mid .minus { width: 37px; }
.bar-mid input { width: 50px; height: 40px; padding: 0; border: 1px solid #b0b0b0; border-radius: 3px; background: #f7f7f7; font: inherit; text-align: center; }
.total { padding: 0 9px 0 6px; }
.pdf-bar .bar-right { gap: 5px; padding-right: 8px; justify-content: flex-end; }
.bar-right .line { margin: 0 2px 0 3px; }
.vscroll { position: relative; flex: none; width: 19px; background: #fcfcfc; }
.vscroll .arrow-up { right: 3px; }
.vthumb { position: absolute; top: 79%; right: 3px; width: 11px; height: 55px; border-radius: 6px; background: #8b8b8b; }
.sheets { position: relative; flex: 1; min-height: 0; padding: 0 63px 0 62px; overflow: hidden; display: flex; flex-direction: column; gap: 20px; background: #e5e5e5; }
.sheet { position: relative; flex: none; height: 375px; box-shadow: 0 2px 8px #aaa; background: radial-gradient(ellipse at 60% 30%, #fdfcfc, #fefdfd 60%, #fff 75%) #fff; color: #222; font: 24px/27px "Liberation Serif", "Times New Roman", serif; }
.specks { position: absolute; inset: 0; width: 100%; height: 100%; }
.answer { height: 14px; padding-left: 220px; line-height: 0; }
.problem { width: 926px; padding: 22px 0 0 158px; display: flex; gap: 30px; transform: rotate(1deg); transform-origin: 0 50%; }
.number { width: 30px; }
.problem p { flex: 1; min-width: 0; }
.problem p span { display: block; white-space: nowrap; }
.problem .full { text-align-last: justify; }
.problem sup { font-size: 15px; line-height: 0; }
.folio { padding: 46px 52px 0 0; text-align: center; font-size: 20px; }
.next { padding: 60px 0 0 762px; }
.page-tip { position: absolute; left: 368px; top: 376px; width: 38px; line-height: 38px; border-radius: 3px; background: #fdfdfd; box-shadow: 0 1px 5px #999; color: #111; font-size: 16px; text-align: center; }

/* taskbar */
.taskbar { position: relative; flex: none; height: 60px; padding: 0 25px 0 27px; display: flex; align-items: center; justify-content: space-between; border-top: 2px solid #b9b9bb; background: linear-gradient(90deg, #f1eee9, #f1efec 35%, #eef1f3 60%, #f0f2f3 85%, #f1ece6); }
.weather { display: flex; align-items: center; gap: 9px; }
.weather span, .weather small { display: block; font-size: 14px; }
.weather small { color: #555; }
.dock-apps { position: absolute; left: 50%; top: 0; height: 58px; padding-left: 10px; transform: translateX(-50%); display: flex; align-items: center; }
.start { width: 29px; margin-right: 17px; }
.search { width: 275px; height: 40px; padding: 0 16px 0 14px; display: flex; align-items: center; gap: 12px; border: 1px solid #d6d4d2; border-radius: 20px; background: #fbfaf9; }
.search input { flex: 1; min-width: 0; padding: 0; border: 0; outline: 0; background: none; font: inherit; font-size: 16px; }
.search input::placeholder { color: #5a5a5a; opacity: 1; }
.apps { display: flex; gap: 5px; margin-left: 4px; }
.app { position: relative; width: 50px; height: 50px; border-radius: 5px; }
.app::after { content: ""; position: absolute; left: 50%; bottom: 0; width: 0; height: 4px; border-radius: 2px; transform: translateX(-50%); background: #8a8a8a; }
.open::after { width: 8px; }
.active { background: #fafafa; box-shadow: inset -4px 0 #f4f4f4, 0 0 2px #ccc; }
.active::after { width: 20px; background: #0a78d4; }
.alert { background: #fbe3e4; }
.alert::after { width: 8px; background: #c42b1c; }
.ea { width: 30px; height: 30px; border-radius: 50%; background: linear-gradient(135deg, #ff2a1a, #ff4a12 50%, #ff8a1c); color: #1b0b0b; font: italic 700 15px/30px "Liberation Sans", Arial, sans-serif; text-align: center; }
.badge { position: absolute; left: 27px; top: 3px; min-width: 20px; height: 20px; padding: 0 4px; display: flex; align-items: center; justify-content: center; border-radius: 10px; background: #0a78d4; color: #fff; font-weight: 400; }
.tick { position: absolute; right: 5px; top: 8px; }
.tray { display: flex; align-items: center; }
.onedrive { margin: 0 23px 0 22px; }
.lang { width: 30px; margin-right: 21px; text-align: center; }
.status { display: flex; align-items: center; gap: 10px; margin-right: 24px; }
.clock { text-align: right; }
.count { width: 20px; height: 20px; margin-left: 9px; border-radius: 10px; background: #0a78d4; color: #fff; font-size: 12px; font-weight: 400; text-align: center; }
```
